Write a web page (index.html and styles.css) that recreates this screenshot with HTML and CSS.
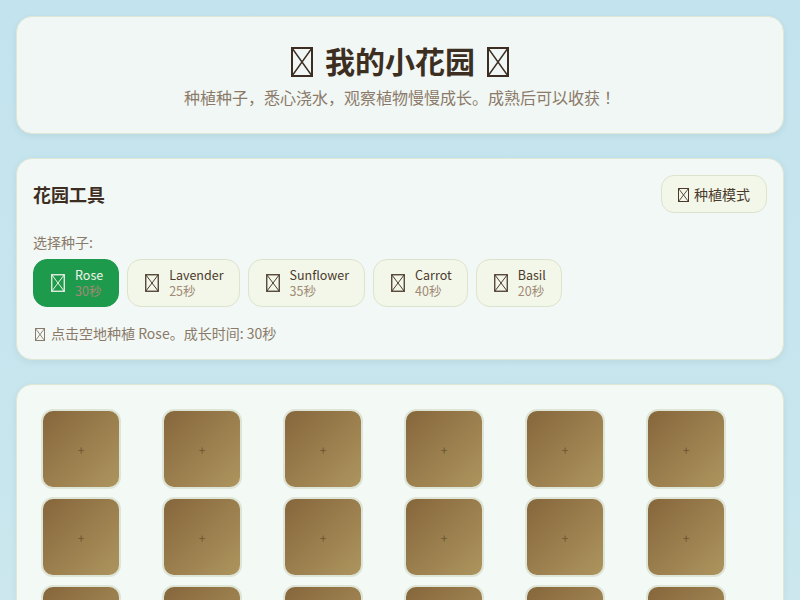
FILE: index.html
```html
<!DOCTYPE html>
<html>
<head>
<meta charset="utf-8">
<title>我的小花园</title>
<link rel="stylesheet" href="styles.css">
</head>
<body>
<div class="page">
  <header class="card hero">
    <h1 class="title"><svg class="tofu tofu-xl" viewBox="0 0 22 30"><rect x="1" y="1" width="20" height="28" fill="none" stroke="currentColor" stroke-width="2"/><path d="M1 1L21 29M21 1L1 29" fill="none" stroke="currentColor" stroke-width="1.4"/></svg><span>我的小花园</span><svg class="tofu tofu-xl" viewBox="0 0 22 30"><rect x="1" y="1" width="20" height="28" fill="none" stroke="currentColor" stroke-width="2"/><path d="M1 1L21 29M21 1L1 29" fill="none" stroke="currentColor" stroke-width="1.4"/></svg></h1>
    <p class="subtitle">种植种子，悉心浇水，观察植物慢慢成长。成熟后可以收获！</p>
  </header>

  <section class="card tools">
    <div class="tools-head">
      <h2 class="tools-title">花园工具</h2>
      <button class="mode-btn"><svg class="tofu tofu-s" viewBox="0 0 11 14"><rect x="0.5" y="0.5" width="10" height="13" fill="none" stroke="currentColor" stroke-width="1"/><path d="M0.5 0.5L10.5 13.5M10.5 0.5L0.5 13.5" fill="none" stroke="currentColor" stroke-width="0.9"/></svg>种植模式</button>
    </div>
    <div class="label">选择种子:</div>
    <div class="seeds">
      <button class="seed active"><svg class="tofu tofu-m" viewBox="0 0 14 18"><rect x="0.75" y="0.75" width="12.5" height="16.5" fill="none" stroke="currentColor" stroke-width="1.3"/><path d="M0.75 0.75L13.25 17.25M13.25 0.75L0.75 17.25" fill="none" stroke="currentColor" stroke-width="1"/></svg><span class="seed-text"><span class="seed-name">Rose</span><span class="seed-time">30秒</span></span></button>
      <button class="seed"><svg class="tofu tofu-m" viewBox="0 0 14 18"><rect x="0.75" y="0.75" width="12.5" height="16.5" fill="none" stroke="currentColor" stroke-width="1.3"/><path d="M0.75 0.75L13.25 17.25M13.25 0.75L0.75 17.25" fill="none" stroke="currentColor" stroke-width="1"/></svg><span class="seed-text"><span class="seed-name">Lavender</span><span class="seed-time">25秒</span></span></button>
      <button class="seed"><svg class="tofu tofu-m" viewBox="0 0 14 18"><rect x="0.75" y="0.75" width="12.5" height="16.5" fill="none" stroke="currentColor" stroke-width="1.3"/><path d="M0.75 0.75L13.25 17.25M13.25 0.75L0.75 17.25" fill="none" stroke="currentColor" stroke-width="1"/></svg><span class="seed-text"><span class="seed-name">Sunflower</span><span class="seed-time">35秒</span></span></button>
      <button class="seed"><svg class="tofu tofu-m" viewBox="0 0 14 18"><rect x="0.75" y="0.75" width="12.5" height="16.5" fill="none" stroke="currentColor" stroke-width="1.3"/><path d="M0.75 0.75L13.25 17.25M13.25 0.75L0.75 17.25" fill="none" stroke="currentColor" stroke-width="1"/></svg><span class="seed-text"><span class="seed-name">Carrot</span><span class="seed-time">40秒</span></span></button>
      <button class="seed"><svg class="tofu tofu-m" viewBox="0 0 14 18"><rect x="0.75" y="0.75" width="12.5" height="16.5" fill="none" stroke="currentColor" stroke-width="1.3"/><path d="M0.75 0.75L13.25 17.25M13.25 0.75L0.75 17.25" fill="none" stroke="currentColor" stroke-width="1"/></svg><span class="seed-text"><span class="seed-name">Basil</span><span class="seed-time">20秒</span></span></button>
    </div>
    <p class="hint"><svg class="tofu tofu-xs" viewBox="0 0 10 13"><rect x="0.5" y="0.5" width="9" height="12" fill="none" stroke="currentColor" stroke-width="1"/><path d="M0.5 0.5L9.5 12.5M9.5 0.5L0.5 12.5" fill="none" stroke="currentColor" stroke-width="0.9"/></svg>点击空地种植 Rose。成长时间: 30秒</p>
  </section>

  <section class="card garden">
    <div class="grid">
      <div class="plot">+</div><div class="plot">+</div><div class="plot">+</div><div class="plot">+</div><div class="plot">+</div><div class="plot">+</div>
      <div class="plot">+</div><div class="plot">+</div><div class="plot">+</div><div class="plot">+</div><div class="plot">+</div><div class="plot">+</div>
      <div class="plot">+</div><div class="plot">+</div><div class="plot">+</div><div class="plot">+</div><div class="plot">+</div><div class="plot">+</div>
      <div class="plot">+</div><div class="plot">+</div><div class="plot">+</div><div class="plot">+</div><div class="plot">+</div><div class="plot">+</div>
    </div>
  </section>
</div>
</body>
</html>
```

FILE: styles.css
```css
* { box-sizing: border-box; }

html, body {
  margin: 0;
  padding: 0;
}

body {
  font-family: "Noto Sans CJK JP", "Noto Sans CJK SC", sans-serif;
  background: linear-gradient(180deg, #c3e3ee 0%, #c8e6ee 60%, #d2eaee 100%);
  color: #3d2e22;
  min-height: 100vh;
}

.page {
  padding: 16px;
  display: flex;
  flex-direction: column;
  gap: 24px;
}

.card {
  background: #f1f7f4;
  border: 1px solid #dfe6d6;
  border-radius: 16px;
  box-shadow: 0 2px 6px rgba(60, 80, 70, 0.08);
}

.tofu {
  display: inline-block;
  flex: none;
}

.tofu-xl {
  width: 22px;
  height: 30px;
  margin: 0 12px;
  vertical-align: -4px;
}

.tofu-m {
  width: 14px;
  height: 18px;
}

.tofu-s {
  width: 11px;
  height: 14px;
  margin-right: 5px;
  vertical-align: -2px;
}

.tofu-xs {
  width: 10px;
  height: 13px;
  margin: 0 6px 0 2px;
  vertical-align: -2px;
}

.hero {
  padding: 24px;
  text-align: center;
}

.title {
  margin: 0;
  font-size: 30px;
  line-height: 38px;
  font-weight: 700;
  color: #3d2e22;
}

.subtitle {
  margin: 6px 0 0;
  font-size: 16px;
  line-height: 24px;
  color: #8b7a69;
}

.tools {
  padding: 16px;
  background: #f2f8f5;
}

.tools-head {
  display: flex;
  align-items: center;
  justify-content: space-between;
}

.tools-title {
  margin: 0;
  font-size: 18px;
  line-height: 26px;
  font-weight: 700;
  color: #3d2e22;
}

.mode-btn {
  font-family: inherit;
  font-size: 14px;
  line-height: 20px;
  padding: 8px 16px;
  border: 1px solid #dde3cc;
  background: #f3f7e9;
  color: #4a3a2c;
  border-radius: 13px;
}

.label {
  margin-top: 19px;
  font-size: 14px;
  line-height: 20px;
  color: #8b7a69;
}

.seeds {
  margin-top: 7px;
  display: flex;
  gap: 8px;
}

.seed {
  font-family: inherit;
  display: flex;
  align-items: center;
  gap: 10px;
  height: 48px;
  padding: 0 15px 0 17px;
  border: 1px solid #dde3cc;
  background: #f3f7e9;
  border-radius: 14px;
  color: #4a3a2c;
  text-align: left;
}

.seed.active {
  background: #1e9a4c;
  border-color: #1e9a4c;
  color: #f2f2ea;
}

.seed-text {
  display: flex;
  flex-direction: column;
}

.seed-name {
  font-size: 12.5px;
  line-height: 16px;
}

.seed-time {
  font-size: 12.5px;
  line-height: 16px;
  color: #a08a76;
}

.hint {
  margin: 16px 0 0;
  font-size: 14px;
  line-height: 20px;
  color: #8b7a69;
}

.garden {
  padding: 24px;
  background: #f3f9f5;
}

.grid {
  display: grid;
  grid-template-columns: repeat(6, 1fr);
  gap: 8px;
}

.plot {
  width: 80px;
  height: 80px;
  border: 2px solid #dfe5d6;
  border-radius: 12px;
  background: linear-gradient(135deg, #86663c 0%, #9a7e4d 50%, #ad955f 100%);
  display: flex;
  align-items: center;
  justify-content: center;
  font-size: 12px;
  color: rgba(70, 45, 20, 0.55);
}
```
